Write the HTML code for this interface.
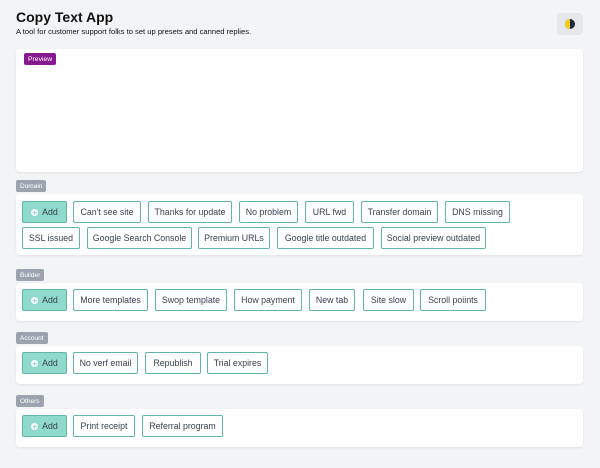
<!DOCTYPE html>
<html><head><style>
*{box-sizing:border-box;margin:0;padding:0}
body{width:600px;height:468px;background:#f3f4f6;font-family:"Liberation Sans",sans-serif;position:relative;overflow:hidden;color:#1f2937}
.a{position:absolute}
h1{position:absolute;left:16px;top:9px;font-size:14px;font-weight:bold;color:#111}
.sub{left:16px;top:27px;font-size:7.6px;color:#111}
.card{position:absolute;left:16px;width:567px;background:#fff;border-radius:4px;box-shadow:0 1px 2px rgba(0,0,0,.08)}
.lab{position:absolute;left:16px;height:12px;background:#9ca3af;color:#fff;font-size:6.5px;padding:0 4px;border-radius:2px;display:flex;align-items:center}
.b{position:absolute;height:22px;border:1px solid #5eb5a8;border-radius:2px;background:#fff;font-size:8.8px;line-height:20px;text-align:center;color:#374151;white-space:nowrap}
.add{background:#8fd9cd;border-color:#5eb5a8;}
.add i{display:inline-block;width:7px;height:7px;border-radius:50%;background:#fff;vertical-align:-1px;margin-right:4px;position:relative}
.add i:before{content:"";position:absolute;left:1.5px;top:3px;width:4px;height:1px;background:#8fd9cd}
.add i:after{content:"";position:absolute;left:3px;top:1.5px;width:1px;height:4px;background:#8fd9cd}
</style></head><body>
<h1>Copy Text App</h1>
<div class="a sub">A tool for customer support folks to set up presets and canned replies.</div>
<div class="a" style="left:557px;top:13px;width:26px;height:22px;background:#e5e7eb;border-radius:4px"><svg width="26" height="22"><circle cx="13" cy="11" r="5" fill="#1e293b"/><path d="M13 6a5 5 0 0 0 0 10z" fill="#facc15"/></svg></div>
<div class="card" style="top:49px;height:123px"><div class="a" style="left:8px;top:4px;height:12px;background:#86198f;color:#fff;font-size:6.8px;padding:0 4px;border-radius:2px;display:flex;align-items:center">Preview</div></div>

<div class="lab" style="top:180px">Domain</div>
<div class="card" style="top:194px;height:61px"></div>
<div class="b add" style="left:22px;top:201px;width:45px"><i></i>Add</div>
<div class="b" style="left:73px;top:201px;width:68px">Can't see site</div>
<div class="b" style="left:148px;top:201px;width:84px">Thanks for update</div>
<div class="b" style="left:239px;top:201px;width:59px">No problem</div>
<div class="b" style="left:305px;top:201px;width:49px">URL fwd</div>
<div class="b" style="left:361px;top:201px;width:77px">Transfer domain</div>
<div class="b" style="left:445px;top:201px;width:65px">DNS missing</div>
<div class="b" style="left:22px;top:227px;width:58px">SSL issued</div>
<div class="b" style="left:87px;top:227px;width:105px">Google Search Console</div>
<div class="b" style="left:198px;top:227px;width:72px">Premium URLs</div>
<div class="b" style="left:277px;top:227px;width:97px">Google title outdated</div>
<div class="b" style="left:381px;top:227px;width:105px">Social preview outdated</div>

<div class="lab" style="top:269px">Builder</div>
<div class="card" style="top:283px;height:38px"></div>
<div class="b add" style="left:22px;top:289px;width:45px"><i></i>Add</div>
<div class="b" style="left:73px;top:289px;width:75px">More templates</div>
<div class="b" style="left:155px;top:289px;width:72px">Swop template</div>
<div class="b" style="left:234px;top:289px;width:68px">How payment</div>
<div class="b" style="left:309px;top:289px;width:46px">New tab</div>
<div class="b" style="left:363px;top:289px;width:51px">Site slow</div>
<div class="b" style="left:420px;top:289px;width:66px">Scroll poiints</div>

<div class="lab" style="top:332px">Account</div>
<div class="card" style="top:346px;height:38px"></div>
<div class="b add" style="left:22px;top:352px;width:45px"><i></i>Add</div>
<div class="b" style="left:73px;top:352px;width:65px">No verf email</div>
<div class="b" style="left:145px;top:352px;width:56px">Republish</div>
<div class="b" style="left:207px;top:352px;width:61px">Trial expires</div>

<div class="lab" style="top:395px">Others</div>
<div class="card" style="top:409px;height:38px"></div>
<div class="b add" style="left:22px;top:415px;width:45px"><i></i>Add</div>
<div class="b" style="left:73px;top:415px;width:62px">Print receipt</div>
<div class="b" style="left:142px;top:415px;width:81px">Referral program</div>
</body></html>
